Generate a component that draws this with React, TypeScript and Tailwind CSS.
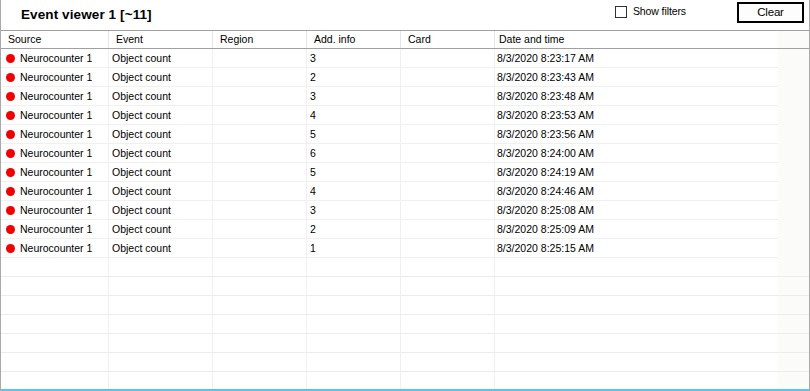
import React from "react";

const rows = [
  { info: "3", time: "8/3/2020 8:23:17 AM" },
  { info: "2", time: "8/3/2020 8:23:43 AM" },
  { info: "3", time: "8/3/2020 8:23:48 AM" },
  { info: "4", time: "8/3/2020 8:23:53 AM" },
  { info: "5", time: "8/3/2020 8:23:56 AM" },
  { info: "6", time: "8/3/2020 8:24:00 AM" },
  { info: "5", time: "8/3/2020 8:24:19 AM" },
  { info: "4", time: "8/3/2020 8:24:46 AM" },
  { info: "3", time: "8/3/2020 8:25:08 AM" },
  { info: "2", time: "8/3/2020 8:25:09 AM" },
  { info: "1", time: "8/3/2020 8:25:15 AM" },
];

const cols = "grid grid-cols-[108px_104px_94px_94px_94px_283px_1fr]";

export default function App() {
  return (
    <div className="w-[810px] h-[391px] bg-white border-x border-[#a9a9a9] flex flex-col overflow-hidden font-['Liberation_Sans',Arial,sans-serif] text-[10.5px] text-black">
      {/* Title bar */}
      <div className="h-[30px] shrink-0 flex items-center">
        <div className="pl-[20px] font-bold text-[13.5px] tracking-[0.1px] mt-[1px]">Event viewer 1 [~11]</div>
        <div className="flex-1" />
        <label className="flex items-center gap-[6px] mr-[51px] -mt-[6px]">
          <span className="w-[12px] h-[12px] border border-[#333] bg-white" />
          <span className="text-[10.5px] tracking-[-0.1px]">Show filters</span>
        </label>
        <button className="w-[67px] h-[21px] border-2 border-black bg-[#fdfdfd] text-[11.5px] tracking-[-0.2px] mr-[5px] -mt-[5px] flex items-center justify-center">
          Clear
        </button>
      </div>

      {/* Header */}
      <div className={`${cols} h-[19px] shrink-0 border-y border-[#a0a0a0] bg-white`}>
        {["Source", "Event", "Region", "Add. info", "Card"].map((h) => (
          <div key={h} className="pl-[7px] border-r border-[#e5e5e5] leading-[17px]">{h}</div>
        ))}
        <div className="pl-[4px] leading-[17px]">Date and time</div>
        <div className="bg-[#fbfbf9]" />
      </div>

      {/* Body */}
      <div className="flex-1 min-h-0 overflow-hidden">
        {rows.map((r, i) => (
          <div key={i} className={`${cols} h-[19px] border-b border-[#f0f0f0] leading-[19px]`}>
            <div className="flex items-center gap-[5px] pl-[5px] border-r border-[#f0f0f0]">
              <span className="w-[9px] h-[9px] rounded-full bg-[#f00000]" />
              <span>Neurocounter 1</span>
            </div>
            <div className="pl-[3px] border-r border-[#f0f0f0]">Object count</div>
            <div className="border-r border-[#f0f0f0]" />
            <div className="pl-[3px] border-r border-[#f0f0f0]">{r.info}</div>
            <div className="border-r border-[#f0f0f0]" />
            <div className="pl-[2px]">{r.time}</div>
            <div className="bg-[#fbfbf9]" />
          </div>
        ))}
        {Array.from({ length: 8 }).map((_, i) => (
          <div key={`e${i}`} className={`${cols} h-[19px] border-b border-[#ececec]`}>
            <div className="border-r border-[#f0f0f0]" />
            <div className="border-r border-[#f0f0f0]" />
            <div className="border-r border-[#f0f0f0]" />
            <div className="border-r border-[#f0f0f0]" />
            <div className="border-r border-[#f0f0f0]" />
            <div />
            <div className="bg-[#fbfbf9]" />
          </div>
        ))}
      </div>

      <div className="h-[2px] shrink-0 bg-[#5cc4ec]" />
    </div>
  );
}
